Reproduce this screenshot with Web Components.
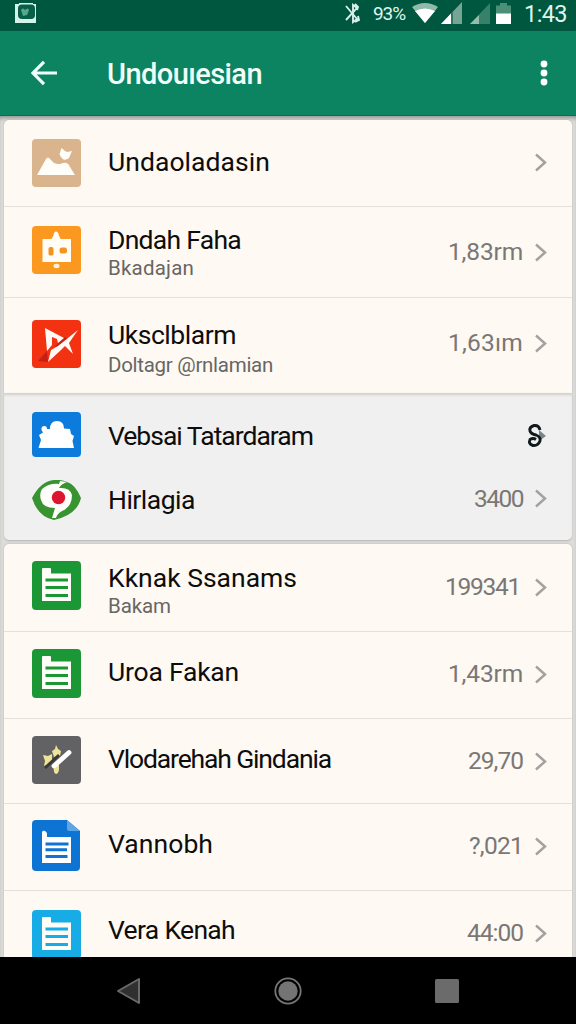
<!DOCTYPE html>
<html lang="id">
<head>
<meta charset="utf-8">
<title>Undouesian</title>
<style>
html,body{margin:0;height:100%;overflow:hidden}
body{background:#dedddb;font-family:Roboto,"Liberation Sans",sans-serif}
</style>
</head>
<body>
<phone-screen>
  <status-bar slot="top"></status-bar>
  <app-bar slot="top"><fit-text w="153">Undou&#x131;esian</fit-text></app-bar>
  <list-card style="margin-top:4px;border-radius:5px 5px 0 0">
    <list-row style="--h:87px;--i:19px;--t:26.5px;--c:32.5px" icon="picture"><fit-text w="160">Undaoladasin</fit-text></list-row>
    <list-row style="--h:91px;--i:19px;--t:18px;--v:30px;--c:36px;--s:1px" icon="robot"><fit-text w="131">Dndah Faha</fit-text><fit-text slot="sub" w="84">Bkadajan</fit-text><fit-text slot="value" w="73">1,83rm</fit-text></list-row>
    <list-row style="--h:95px;--i:22px;--t:22px;--v:30px;--c:36px" icon="bird"><fit-text w="126">Uksclblarm</fit-text><fit-text slot="sub" w="163">Doltagr @rnlamian</fit-text><fit-text slot="value" w="73">1,63&#x131;m</fit-text></list-row>
  </list-card>
  <list-card muted style="margin-bottom:4px;border-radius:0 0 5px 5px">
    <list-row style="--h:79px;--i:19px;--t:28px;--c:29px" icon="cloud" mark><fit-text w="203">Vebsai Tatardaram</fit-text></list-row>
    <list-row style="--h:68px;--i:8px;--t:12.5px;--v:12px;--c:17px" icon="eye"><fit-text w="85">Hirlagia</fit-text><fit-text slot="value" w="47">3400</fit-text></list-row>
  </list-card>
  <list-card style="border-radius:5px 5px 0 0">
    <list-row style="--h:88px;--i:17px;--t:19px;--v:28px;--c:33.5px;--vr:3px;--s:1px" icon="sheet"><fit-text w="187">Kknak Ssanams</fit-text><fit-text slot="sub" w="61">Bakam</fit-text><fit-text slot="value" w="73">199341</fit-text></list-row>
    <list-row style="--h:87px;--i:17px;--t:25px;--v:27px;--c:33px" icon="sheet"><fit-text w="129">Uroa Fakan</fit-text><fit-text slot="value" w="73">1,43rm</fit-text></list-row>
    <list-row style="--h:85px;--i:17px;--t:25px;--v:27px;--c:32.5px" icon="wand"><fit-text w="221">Vlodarehah Gindania</fit-text><fit-text slot="value" w="53">29,70</fit-text></list-row>
    <list-row style="--h:87px;--i:16px;--t:25px;--v:27px;--c:32.5px" icon="doc"><fit-text w="103">Vannobh</fit-text><fit-text slot="value" w="52">?,021</fit-text></list-row>
    <list-row style="--h:87px;--i:19px;--t:24px;--v:26.5px;--c:32.5px" icon="note"><fit-text w="125">Vera Kenah</fit-text><fit-text slot="value" w="54">44:00</fit-text></list-row>
  </list-card>
  <nav-bar slot="bottom"></nav-bar>
</phone-screen>
<script>
const lines = '<path d="M10 8q0-1 1-1h7q1 0 1 1v4.500h20V40H10z" fill="#fffdf7"/><path d="M13.500 19h22.500M13.500 26.500h22.500M13.500 34.500h22.500" stroke="currentColor" stroke-width="2.900"/>';
const tile = (w, h, color, inner, r = 4) =>
  `<svg width="${w}" height="${h}" viewBox="0 0 ${w} ${h}" style="color:${color}"><rect width="${w}" height="${h}" rx="${r}" fill="currentColor"/>${inner}</svg>`;
const icons = {
  picture: tile(49, 48, '#d9b48d', '<path d="M5 36 14 20Q16 17 18 20L22 24Q27 26 31 24 36 23 38 28L43 36zM27.500 15l2-6 3.500 3 2 1 5-1-3 7q-6 5-9.500-4z" fill="#fffdf8"/>'),
  robot: tile(49, 48, '#fb981f', '<path d="M10.500 13h9l2-3.500Q22 5.500 24 5.500T27 9.500L28.500 13H39v23H10.500z" fill="#fffdf5"/><rect x="16.500" y="21" width="5" height="8.500" rx="1.800" fill="#f39420"/><rect x="27.500" y="21.500" width="7.500" height="6" rx="2.500" fill="#f39420"/><ellipse cx="24.500" cy="40" rx="3" ry="2.200" fill="#fff2dc"/>'),
  bird: tile(49, 48, '#f23211', '<path d="M6 41 15 31 16 42zM23 26 33 17 37 20 26 31z" fill="#c71f13"/><path d="M13 8 32 18 26 23 25 19 20 17 20 25 15 31zM16 42 19 30 26 26 46 10 37 23 41 34 33 26 29 30z" fill="#fffaf5"/>'),
  cloud: tile(49, 45, '#0c7bdb', '<path d="M6.500 36 9 28 7 23 11 20.500 9.500 18Q9 14 12.500 14 15 14 15 17L18 17Q18 9 25 9T32 16.500L38 17 39 22 42 24 40.500 29 42 36z" fill="#fff"/>'),
  eye: '<svg width="49" height="40" viewBox="0 0 49 40"><path d="M0 18Q9 1 22 0 31-.5 35 2 43 4 49 18 45 35 22 40 6 37 0 18z" fill="#379430"/><path d="M27 4Q17 3 10 9 7 14 9 20 11 28 23 28L20 38 24 38Q25 34 30 31 40 27 40 15 38 7 27 8 29 4 35 2L28 1z" fill="#fffefb"/><circle cx="26.500" cy="17.500" r="6.700" fill="#dc1630"/></svg>',
  sheet: tile(49, 49, '#1c9735', lines),
  wand: tile(49, 48, '#626264', '<path d="m24 9 2 4 3 2-1 5-6 1-2-6 3-2zM11 19l5 1 4-2v6l-3 4-5 2 1-5zM22 31l5-3v6q-1 4-3 4-3-1-2-7z" fill="#ede496"/><path d="M13 32 27 19" stroke="#39383c" stroke-width="3"/><path d="m22 30 15-13.500" stroke="#fff" stroke-width="4.800" stroke-linecap="round"/>'),
  doc: '<svg width="49" height="51" viewBox="0 0 49 51" style="color:#0e74d3"><path d="M4 0h31l13 11v36q0 4-4 4H4q-4 0-4-4V4q0-4 4-4z" fill="currentColor"/><path d="m35 0 13 11H37q-2 0-2-2z" fill="#5ea5e5"/><path d="M10 12q1-2 3-1 2 1 2 3v3h24v26H10z" fill="#fff"/><path d="M13.500 24h23M13.500 29.700h21.500M13.500 36.500h22" stroke="currentColor" stroke-width="2.900"/></svg>',
  note: tile(49, 49, '#17ace6', lines)
};

function define(name, html, setup) {
  const template = document.createElement('template');
  template.innerHTML = html;
  customElements.define(name, class extends HTMLElement {
    constructor() {
      super();
      this.attachShadow({ mode: 'open' }).append(template.content.cloneNode(true));
    }
    connectedCallback() { if (setup) setup(this, this.shadowRoot); }
  });
}

define('phone-screen', `<style>
:host{display:flex;flex-direction:column;width:576px;height:1024px;overflow:hidden;background:#dedddb}
main{flex:1;min-height:0;overflow:hidden;padding:0 4px;box-shadow:inset 0 4px 4px -2px #8b8f8a}
</style><slot name="top"></slot><main><slot></slot></main><slot name="bottom"></slot>`);

define('status-bar', `<style>
:host{display:block;height:31px;background:#00573f;color:#dff5ee}
div{display:flex;height:31px;padding:0 11px 0 15px;align-items:flex-start}
svg{display:block;flex:none}
.gap{flex:1}
.p{font-size:19px;line-height:28px;width:31px;margin:0 8px 0 12px;white-space:nowrap}
.t{font-size:23.500px;line-height:29px;width:41px;margin-left:13px;white-space:nowrap}
</style><div>
<svg width="22" height="24" viewBox="0 0 22 24"><path d="M0 4h4V3h14v1h3v19H0z" fill="#d5f3e8"/><rect x="3" y="4.500" width="17" height="14.500" rx="4" fill="#075f48"/><path d="M6 10q2-3 4 0 3-3 4 0l-2 5-4 1z" fill="#55a98b"/></svg>
<span class="gap"></span>
<svg width="16" height="24" viewBox="0 0 16 24"><path d="M1 6 12 19 8 22V5l4 3L1 20M10 4l3 3-1 3M10 22l4-2-1-4" fill="none" stroke="#d8eee8" stroke-width="1.900"/></svg>
<fit-text class="p" w="30">93%</fit-text>
<svg width="26" height="24" viewBox="0 0 26 24"><path d="M0 7Q13-1 26 7L13 23z" fill="#92baaa"/><path d="M3 11Q13 6 23 11L13 23z" fill="#fff"/></svg>
<svg width="21" height="24" viewBox="0 0 21 24" style="margin-left:3px"><path d="M0 24 21 2v22z" fill="#76a495"/><path d="M0 24 10 13.500V24z" fill="#fff"/><path d="M11 12.500V24" stroke="#1c654f" stroke-width="1.500"/></svg>
<svg width="20" height="24" viewBox="0 0 20 24" style="margin-left:8px"><path d="M0 24 20 3v21z" fill="#37816a"/><path d="M0 24 9 15v9z" fill="#94bdad"/></svg>
<svg width="15" height="24" viewBox="0 0 15 24" style="margin-left:6px"><path d="M0 5.500h4V3h7v2.500h4V14H0z" fill="#4b8f77"/><path d="M0 13.500h15V24H0z" fill="#fff"/></svg>
<fit-text class="t" w="41">1:43</fit-text></div>`);

define('app-bar', `<style>
:host{display:flex;align-items:center;height:85px;background:#0c8361;color:#f0fff9;padding:0 25px 0 31px;box-sizing:border-box;border-bottom:1px solid #087052}
.title{flex:1;margin-left:49px;padding-top:2px;font-size:29px;font-weight:500;line-height:34px}
svg{display:block}
</style>
<svg width="27" height="26" viewBox="0 0 27 26"><path d="M13 1.800 2 13l11 11.200M2 13h24" fill="none" stroke="currentColor" stroke-width="3.200"/></svg>
<span class="title"><slot></slot></span>
<svg width="14" height="26" viewBox="0 0 14 26"><g fill="#fff"><circle cx="7" cy="4" r="3.400"/><circle cx="7" cy="13" r="3.400"/><circle cx="7" cy="22" r="3.400"/></g></svg>`);

define('list-card', `<style>
:host{display:block;background:#fef9f3;box-shadow:0 0 2px #aaa;overflow:hidden}
:host([muted]){background:#f1f0f0;box-shadow:0 1px 2px #b5b4b4,inset 0 3px 3px -1px #d2d0ce}
:host([muted]) ::slotted(list-row){--line:transparent}
::slotted(list-row:last-child){--line:transparent}
</style><slot></slot>`);

define('list-row', `<style>
:host{display:flex;align-items:flex-start;box-sizing:border-box;height:var(--h);border-bottom:1px solid var(--line,#e4e0dc);padding:0 25px 0 28px}
.icon{flex:none;width:49px;margin-top:var(--i)}
svg{display:block}
.text{flex:1;min-width:0;margin:var(--t) 0 0 27px;color:#0d0d0d;font-size:26.500px;line-height:30px}
.sub{font-size:20.500px;line-height:24px;margin-top:var(--s,3px);color:#686664}
.value{margin:var(--v) var(--vr,0px) 0 0;font-size:24.500px;line-height:30px;color:#7a7775}
.end{flex:none;margin:var(--c) 0 0 12px}
</style><div class="icon"></div><div class="text"><slot></slot><div class="sub"><slot name="sub"></slot></div></div><div class="value"><slot name="value"></slot></div><div class="end"></div>`, (host, root) => {
  root.querySelector('.icon').innerHTML = icons[host.getAttribute('icon')];
  root.querySelector('.end').innerHTML = host.hasAttribute('mark')
    ? '<svg width="20" height="26" viewBox="0 0 20 26"><path d="m12 8 7 6-7 5" fill="#78858a"/><path d="M13 8Q12 3 7 3.500 2 5 3 9 4 12 9 13 14 15 13 19 11 24 6 23.500 1 22 3 17.500q3-2 6 0" fill="none" stroke="#101a1d" stroke-width="2.900"/></svg>'
    : '<svg width="12" height="19" viewBox="0 0 12 19"><path d="m1 1.500 9 8-9 8" fill="none" stroke="#a4a19f" stroke-width="2.500"/></svg>';
});

define('fit-text', `<style>
:host{display:inline-block;vertical-align:top;white-space:nowrap}
span{display:inline-block;white-space:nowrap}
</style><span><slot></slot></span>`);

/* Track each label to its set width. */
function fitAll(root) {
  root.querySelectorAll('*').forEach(el => {
    if (el.localName === 'fit-text') {
      const span = el.shadowRoot.querySelector('span');
      const gap = (+el.getAttribute('w') + 2 - span.getBoundingClientRect().width) / el.textContent.length;
      span.style.letterSpacing = gap + 'px';
    } else if (el.shadowRoot) fitAll(el.shadowRoot);
  });
}
fitAll(document);
define('nav-bar', `<style>
:host{display:flex;height:67px;background:#000;align-items:center;justify-content:space-between;padding:1px 117px 0 116px;box-sizing:border-box}
svg{display:block}
</style>
<svg width="25" height="28" viewBox="0 0 25 28"><path d="M2 14 23 2v24z" fill="#303030" stroke="#696969" stroke-width="2" stroke-linejoin="round"/></svg>
<svg width="28" height="28" viewBox="0 0 28 28"><circle cx="14" cy="14" r="12.700" fill="#000" stroke="#767676" stroke-width="1.800"/><circle cx="14" cy="14" r="9.700" fill="#747474"/></svg>
<svg width="24" height="24" viewBox="0 0 24 24"><rect width="24" height="24" rx="1.500" fill="#6b6b6b"/></svg>`);
</script>
</body>
</html>
